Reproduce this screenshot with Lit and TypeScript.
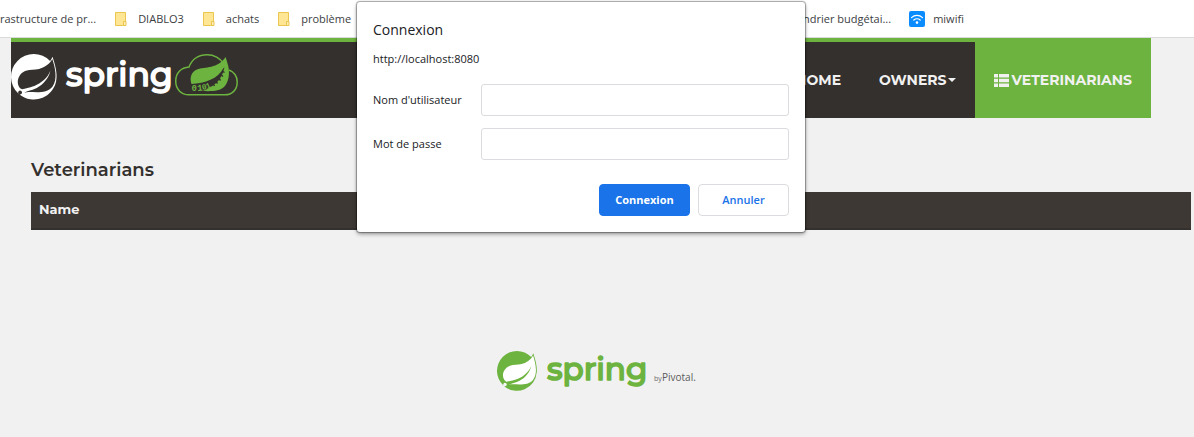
import { LitElement, html, css, svg } from "lit";
import { customElement, property } from "lit/decorators.js";

const leafPath =
  "M21.8537 1.4158a10.4504 10.4504 0 0 1-1.284 2.2471A11.9666 11.9666 0 1 0 3.8518 20.7757l.4445.3951a11.9543 11.9543 0 0 0 19.6316-8.2971c.3457-3.0126-.568-6.8649-2.0742-11.458zM5.5805 20.8745a1.0174 1.0174 0 1 1-.1482-1.4323 1.0396 1.0396 0 0 1 .1482 1.4323zm16.1991-3.5806c-2.9385 3.9263-9.2601 2.5928-13.2852 2.7904 0 0-.7161.0494-1.4323.1481 0 0 .2717-.1234.6174-.2469 2.8398-.9877 4.1732-1.1853 5.9018-2.0743 3.2349-1.6545 6.4698-5.2844 7.1118-9.0379-1.2347 3.6053-4.9881 6.7167-8.3959 7.9761-2.3459.8643-6.5685 1.7039-6.5685 1.7039l-.1729-.0988c-2.8645-1.4076-2.9632-7.6304 2.2718-9.6306 2.2966-.889 4.4696-.395 6.9637-.9877 2.6422-.6174 5.7043-2.5929 6.939-5.1857 1.3828 4.1732 3.062 10.643.0493 14.6434z";

const folderIcon = svg`
  <svg width="16" height="16" viewBox="0 0 16 16" aria-hidden="true">
    <path d="M1.5 1.5h10v13h-10z" fill="#ffe694" stroke="#eac54f"/>
    <path d="M9.5 10.5h2.500v4h-2.500z" fill="#fff0b8" stroke="#eac54f"/>
  </svg>`;

const wifiIcon = svg`
  <svg width="16" height="16" viewBox="0 0 16 16" aria-hidden="true">
    <rect width="16" height="16" rx="2" fill="#0a8cff"/>
    <g fill="none" stroke="#fff" stroke-width="1.2" stroke-linecap="round">
      <path d="M2.5 6.6a8 8 0 0 1 11 0"/>
      <path d="M4.8 9a4.700 4.700 0 0 1 6.400 0"/>
    </g>
    <circle cx="8" cy="11.6" r="1.3" fill="#fff"/>
  </svg>`;

@customElement("bookmark-bar")
export class BookmarkBar extends LitElement {
  static styles = css`
    :host {
      display: block;
    }
    .bar {
      display: flex;
      align-items: center;
      height: 38px;
      box-sizing: border-box;
      overflow: hidden;
      background: #fff;
      border-bottom: 1px solid #d9dadc;
      font: 11px/16px "Open Sans", "Noto Sans", sans-serif;
      white-space: nowrap;
    }
    .link {
      display: flex;
      flex: none;
      align-items: center;
      gap: 8px;
      margin-right: 18px;
      color: #3c4043;
      text-decoration: none;
    }
    .covered {
      width: 522px;
      justify-content: flex-end;
    }
  `;

  render() {
    return html`
      <nav class="bar" aria-label="Favoris">
        <a class="link" href="#">rastructure de pr...</a>
        <a class="link" href="#">${folderIcon}<span>DIABLO3</span></a>
        <a class="link" href="#">${folderIcon}<span>achats</span></a>
        <a class="link" href="#">${folderIcon}<span>problème</span></a>
        <a class="link covered" href="#"><span>Calendrier budgétai...</span></a>
        <a class="link" href="#">${wifiIcon}<span>miwifi</span></a>
      </nav>
    `;
  }
}

@customElement("spring-logo")
export class SpringLogo extends LitElement {
  @property() variant = "header";

  static styles = css`
    :host {
      display: block;
    }
    .logo {
      display: block;
      overflow: visible;
    }
    .word {
      font-family: Montserrat, "Liberation Sans", sans-serif;
      font-weight: 500;
      stroke-linejoin: round;
      stroke-linecap: round;
    }
    .digits {
      font-family: "Liberation Mono", monospace;
      font-weight: 700;
    }
    .small {
      font-family: "Open Sans", sans-serif;
    }
  `;

  render() {
    return this.variant === "footer"
      ? html`
          <svg class="logo" width="200" height="48" viewBox="0 0 200 48" role="img" aria-label="Spring by Pivotal">
            <path d="M36.500 7C31 17 5 12 5 30L8 37C25 37 38 38 39 22Z" fill="#fff"/>
            <path transform="translate(0 3) scale(1.66)" d=${leafPath} fill="#6db33f"/>
            <text class="word" x="50" y="32" font-size="31" fill="#6db33f" stroke="#6db33f" stroke-width="1.6">spring</text>
            <text class="small" x="157" y="33" font-size="7" fill="#6b6b6b">by</text>
            <text class="small" x="165" y="33" font-size="10" fill="#5b5b5b">Pivotal.</text>
          </svg>
        `
      : html`
          <svg class="logo" width="230" height="56" viewBox="0 0 230 56" role="img" aria-label="Spring">
            <path transform="scale(1.9)" d=${leafPath} fill="#fff"/>
            <text class="word" x="55" y="32" font-size="33" fill="#fff" stroke="#fff" stroke-width="1.6">spring</text>
            <g transform="translate(163 -1)">
              <path
                d="M50 11C46 5 40 1.700 33 1.700C25 1.700 18 6 15 14C7 14.500 1.700 20 1.700 28C1.700 36 7 41.800 15 41.800H51C58 41.800 63.200 37 63.200 29C63.200 23 60 19 55 17"
                fill="none" stroke="#6db33f" stroke-width="1.5"/>
              <path
                d="M51.600 4C52.500 7 53.500 10 54.200 13L49.500 15C44 26 31 30 17.500 31C15.500 25 17 19 23 16.500C31 13.500 44 16 51.600 4Z"
                fill="#6db33f"/>
              <path d="M54 12C56 20 55 29 50 34C46 38 38 38.500 28.500 38C39 34 48 28 50.500 14Z" fill="#6db33f"/>
              <g class="digits" fill="#6db33f">
                <text x="17.500" y="38" font-size="9">0</text>
                <text x="23.500" y="38" font-size="9" transform="rotate(-6 23.500 38)">1</text>
                <text x="28.500" y="37" font-size="8" transform="rotate(-14 28.500 37)">0</text>
                <text x="33" y="36" font-size="8" transform="rotate(-24 33 36)">1</text>
              </g>
              <path d="M38 29L40.500 33M41 27L43.500 30.500M44 24L46.500 27.500M46 21L49 23.500M48 18L50.500 19.500" stroke="#34302d" stroke-width="1.4"/>
            </g>
          </svg>
        `;
  }
}

@customElement("site-header")
export class SiteHeader extends LitElement {
  static styles = css`
    :host {
      display: block;
    }
    .bar {
      display: flex;
      height: 80px;
      box-sizing: border-box;
      margin: 0 43px 0 11px;
      border-top: 4px solid #6db33f;
      background: #34302d;
    }
    .brand {
      margin-right: auto;
      padding-top: 12px;
    }
    .link {
      display: flex;
      align-items: center;
      gap: 1px;
      padding: 0 19px;
      color: #f1f1f1;
      font: 700 14px/20px Montserrat, Inter, sans-serif;
      text-decoration: none;
      text-transform: uppercase;
    }
    .active {
      gap: 3px;
      background: #6db33f;
    }
  `;

  render() {
    return html`
      <nav class="bar">
        <a class="brand" href="#"><spring-logo></spring-logo></a>
        <a class="link" href="#">Home</a>
        <a class="link" href="#">
          <span>Owners</span>
          <svg width="8" height="4" viewBox="0 0 8 4" aria-hidden="true"><path d="M0 0h8L4 4z" fill="#f1f1f1"/></svg>
        </a>
        <a class="link active" href="#">
          <svg width="15" height="13" viewBox="0 0 15 13" aria-hidden="true">
            <path d="M0 0h4v3.500H0zM5 0h10v3.500H5zM0 4.700h4v3.500H0zM5 4.700h10v3.500H5zM0 9.500h4V13H0zM5 9.500h10V13H5z" fill="#f1f1f1"/>
          </svg>
          <span>Veterinarians</span>
        </a>
      </nav>
    `;
  }
}

@customElement("login-dialog")
export class LoginDialog extends LitElement {
  static styles = css`
    .panel {
      position: absolute;
      top: 2px;
      left: 357px;
      width: 448px;
      box-sizing: border-box;
      padding: 16px;
      border-radius: 3px;
      background: #fff;
      box-shadow: 0 0 1px 1px rgba(0, 0, 0, 0.32), 0 2px 4px rgba(0, 0, 0, 0.4);
      color: #202124;
      font: 11px/20px "Open Sans", "Noto Sans", sans-serif;
    }
    .title {
      margin: 0 0 8px;
      font-size: 14px;
      font-weight: 400;
      line-height: 24px;
    }
    .origin {
      margin: 0 0 16px;
      line-height: 18px;
    }
    .fields {
      display: grid;
      grid-template-columns: 92px 1fr;
      gap: 12px 16px;
      align-items: center;
      white-space: nowrap;
    }
    .input {
      width: 100%;
      height: 32px;
      box-sizing: border-box;
      border: 1px solid #dadce0;
      border-radius: 3px;
      background: #fff;
      font: inherit;
    }
    .actions {
      display: flex;
      justify-content: flex-end;
      gap: 8px;
      margin-top: 24px;
    }
    .button {
      width: 91px;
      height: 32px;
      padding: 0;
      border: 1px solid #dadce0;
      border-radius: 4px;
      background: #fff;
      color: #1a73e8;
      font: 600 11px/16px "Open Sans", "Noto Sans", sans-serif;
    }
    .primary {
      border-color: #1a73e8;
      background: #1a73e8;
      color: #fff;
      font-weight: 700;
    }
  `;

  render() {
    return html`
      <form class="panel" role="dialog" aria-labelledby="title" @submit=${(e: Event) => e.preventDefault()}>
        <h2 class="title" id="title">Connexion</h2>
        <p class="origin">http://localhost:8080</p>
        <div class="fields">
          <label for="user">Nom d'utilisateur</label>
          <input class="input" id="user" type="text" />
          <label for="password">Mot de passe</label>
          <input class="input" id="password" type="password" />
        </div>
        <div class="actions">
          <button class="button primary" type="submit">Connexion</button>
          <button class="button" type="button">Annuler</button>
        </div>
      </form>
    `;
  }
}

@customElement("app-root")
export class AppRoot extends LitElement {
  static styles = css`
    :host {
      display: block;
      position: relative;
      min-height: 100vh;
      background: #f1f1f1;
    }
    .main {
      padding: 40px 3px 0 31px;
      color: #34302d;
      font-family: Montserrat, Inter, sans-serif;
    }
    .heading {
      margin: 0 0 10px;
      font-size: 18px;
      font-weight: 600;
      line-height: 24px;
    }
    .table {
      width: 100%;
      border-spacing: 0;
      background: #3d3834;
    }
    .cell {
      height: 38px;
      box-sizing: border-box;
      padding: 0 8px 2px;
      border-bottom: 2px solid #34302d;
      color: #f1f1f1;
      font-size: 13px;
      font-weight: 700;
      line-height: 20px;
      text-align: left;
    }
    .footer {
      display: flex;
      justify-content: center;
      padding-top: 118px;
    }
  `;

  render() {
    return html`
      <bookmark-bar></bookmark-bar>
      <site-header></site-header>
      <main class="main">
        <h2 class="heading">Veterinarians</h2>
        <table class="table">
          <thead>
            <tr><th class="cell" scope="col">Name</th></tr>
          </thead>
        </table>
      </main>
      <footer class="footer"><spring-logo variant="footer"></spring-logo></footer>
      <login-dialog></login-dialog>
    `;
  }
}
